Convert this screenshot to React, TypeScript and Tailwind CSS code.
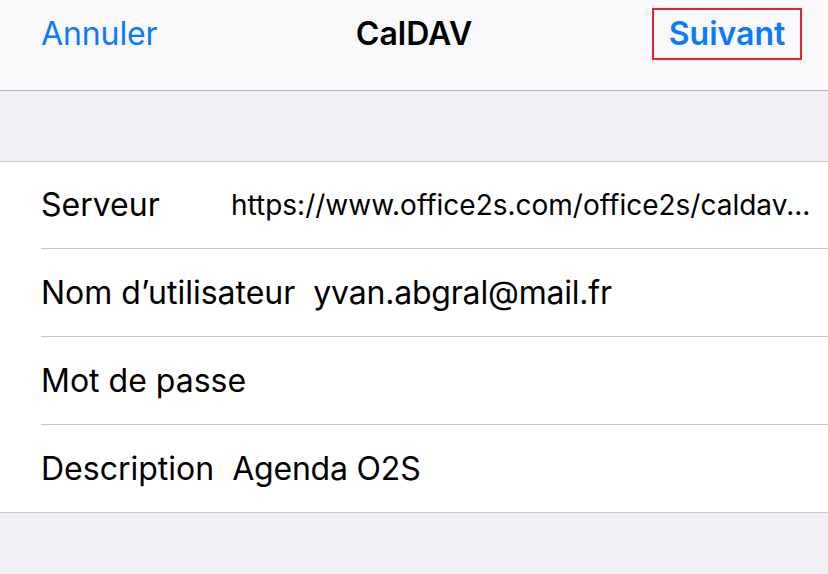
import React from "react";

const font = { fontFamily: "Inter, 'Liberation Sans', sans-serif" };

function Row({
  label,
  value,
  valueClass,
  last,
  h,
}: {
  label: string;
  value?: string;
  valueClass?: string;
  last?: boolean;
  h: string;
}) {
  return (
    <div className="pl-[41px] bg-white">
      <div
        className={`${h} flex items-center ${last ? "" : "border-b border-[#c8c7cc]"}`}
      >
        <div className="min-w-[172px] text-[32px] text-black whitespace-nowrap">
          {label}
        </div>
        {value && (
          <div className={`ml-[18px] text-black whitespace-nowrap ${valueClass ?? "text-[32px] tracking-[-0.2px]"}`}>
            {value}
          </div>
        )}
      </div>
    </div>
  );
}

export default function App() {
  return (
    <div className="w-[828px] h-[574px] bg-[#efeff4] overflow-hidden" style={font}>
      <div className="h-[91px] bg-[#f9f9fb] border-b border-[#b6b6ba]">
        <div className="h-[68px] flex items-center justify-between pl-[41px] pr-[26px] relative">
          <span className="text-[32px] text-[#0a7aff] tracking-[-0.1px]">Annuler</span>
          <span className="absolute left-0 right-0 text-center text-[32px] font-semibold text-black pointer-events-none">
            CalDAV
          </span>
          <span className="h-[52px] w-[150px] border-2 border-[#e8222b] flex items-center justify-center text-[32px] font-semibold text-[#0a7aff]">
            Suivant
          </span>
        </div>
      </div>
      <div className="h-[70px]" />
      <div className="border-t border-b border-[#c8c7cc]">
        <Row
          h="h-[87px]"
          label="Serveur"
          value="https://www.office2s.com/office2s/caldav..."
          valueClass="text-[28px] tracking-[0px]"
        />
        <Row h="h-[88px]" label="Nom d’utilisateur" value="yvan.abgral@mail.fr" />
        <Row h="h-[88px]" label="Mot de passe" />
        <Row h="h-[87px]" label="Description" value="Agenda O2S" last />
      </div>
    </div>
  );
}
